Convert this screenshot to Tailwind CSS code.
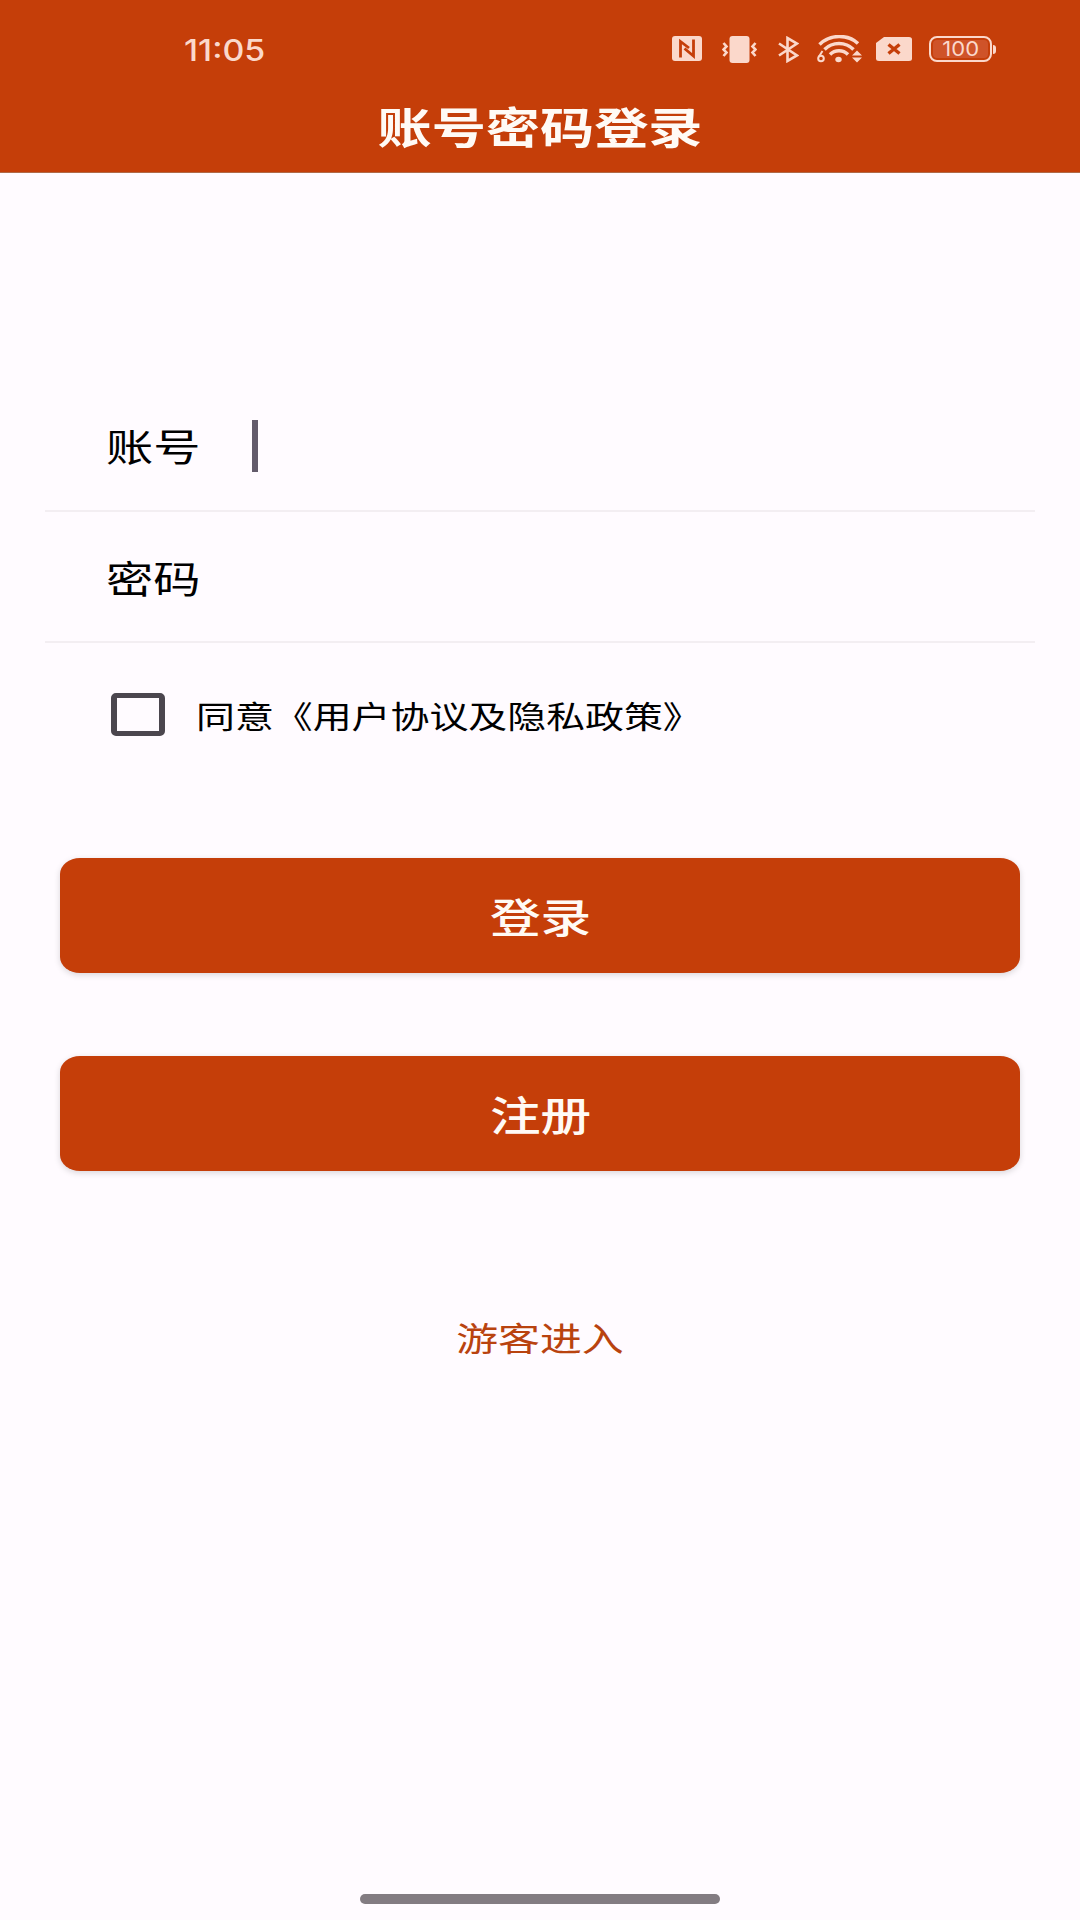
<!DOCTYPE html>
<html lang="zh-CN">
<head>
    <meta charset="UTF-8">
    <meta name="viewport" content="width=device-width, initial-scale=1.0">
    <title>账号密码登录</title>
    <script src="https://cdn.jsdelivr.net/npm/@tailwindcss/browser@4"></script>
</head>
<body class="bg-[#fffbff] font-['Noto_Sans_CJK_SC',sans-serif] text-black">
    <div class="flex h-[1920px] w-[1080px] flex-col overflow-hidden">
        <header class="flex h-[173px] shrink-0 flex-col border-b border-[#b06a48] bg-[#c53e09]">
            <!-- Status bar -->
            <div class="flex h-[98px] items-center justify-between pl-[184px] pr-[84px] text-[#fbd8cb]">
                <span class="inline-block origin-left translate-y-px scale-x-[1.13] font-['Inter',sans-serif] text-[30px] font-medium leading-none">11:05</span>
                <div class="flex items-center">
                    <!-- NFC -->
                    <svg class="mr-5" width="30" height="26" viewBox="0 0 30 26" fill="none">
                        <rect width="30" height="25" rx="3" fill="currentColor"/>
                        <path d="M8.500 21.500V5.500l8.500 6.500M12.500 12.500l9 7.500V3.500" stroke="#c53e09" stroke-width="2.800"/>
                    </svg>
                    <!-- Vibrate -->
                    <svg class="mr-[21px]" width="35" height="27" viewBox="0 0 35 27" fill="none">
                        <rect x="7.500" width="20" height="27" rx="3" fill="currentColor"/>
                        <path d="M1.500 7l3 3.500-3 3 3 3-3 3.500M33.500 7l-3 3.500 3 3-3 3 3 3.500" stroke="currentColor" stroke-width="2.600"/>
                    </svg>
                    <!-- Bluetooth -->
                    <svg class="mr-[18px]" width="21" height="27" viewBox="0 0 21 27" fill="none">
                        <path d="M1 7.500l18 12-9.500 5.500V2l9.500 5.500-18 12" stroke="currentColor" stroke-width="2.600"/>
                    </svg>
                    <!-- Wi-Fi 6 -->
                    <svg class="mr-[14px]" width="45" height="28" viewBox="0 0 45 28" fill="none">
                        <path d="M2.500 9.500C13-1 31-1 41 8.500M7.500 14.500c8-8 21-8 29 0M13 19.500c5-5 13-5 18 0" stroke="currentColor" stroke-width="3.500"/>
                        <ellipse cx="21.500" cy="24.500" rx="3.200" ry="2.700" fill="currentColor"/>
                        <path d="M5.500 16L2 21.500" stroke="currentColor" stroke-width="2"/>
                        <circle cx="4" cy="23.500" r="2.800" stroke="currentColor" stroke-width="2"/>
                        <path d="M35 20.500h10l-5-5zM35 22.500h10l-5 5z" fill="currentColor"/>
                    </svg>
                    <!-- No SIM -->
                    <svg class="mr-[17px]" width="36" height="24" viewBox="0 0 36 24" fill="none">
                        <path d="M8 0h25q3 0 3 2.500v19q0 2.500-3 2.500H3q-3 0-3-2.500V6z" fill="currentColor"/>
                        <path d="M12.500 7.500l11 9m0-9l-11 9" stroke="#c53e09" stroke-width="3.400"/>
                    </svg>
                    <!-- Battery -->
                    <div class="flex items-center">
                        <div class="flex h-[26px] w-[63px] items-center justify-center rounded-[8px] border-2 border-current bg-[#c53e09] p-[2px]">
                            <div class="flex h-full w-full items-center justify-center rounded-[4px] bg-[#cf5329]">
                                <span class="inline-block scale-x-[1.1] font-['Inter',sans-serif] text-[20px] leading-none">100</span>
                            </div>
                        </div>
                        <div class="ml-[1px] h-[9px] w-[3px] rounded-r-full bg-current"></div>
                    </div>
                </div>
            </div>
            <h1 class="flex h-[54px] items-center justify-center text-[43px] font-bold leading-none text-[#fffaf5]">
                <span class="inline-block scale-x-[1.26]">账号密码登录</span>
            </h1>
        </header>

        <main class="flex flex-1 flex-col pt-[208px]">
            <div class="mx-[45px] flex h-[131px] items-center border-b-2 border-[#f3eef2] pl-[61px]">
                <label class="w-[146px] -translate-y-px text-[37.5px] leading-none"><span class="inline-block origin-left scale-x-[1.26]">账号</span></label>
                <div class="h-[52px] w-[6px] bg-[#635b6b]"></div>
            </div>
            <div class="mx-[45px] flex h-[131px] items-center border-b-2 border-[#f3eef2] pl-[61px]">
                <label class="w-[146px] text-[37.5px] leading-none"><span class="inline-block origin-left scale-x-[1.26]">密码</span></label>
            </div>

            <div class="mt-[50px] flex h-[43px] items-center pl-[111px]">
                <div class="h-[43px] w-[54px] rounded-[5px] border-x-[6px] border-y-[5px] border-[#4b464e]"></div>
                <span class="ml-[31px] inline-block origin-left scale-x-[1.255] text-[31px] leading-none">同意《用户协议及隐私政策》</span>
            </div>

            <div class="mx-[60px] mt-[122px] flex flex-col gap-[83px]">
                <button class="flex h-[115px] items-center justify-center rounded-[20px/16px] bg-[#c53e09] pt-px text-[40.5px] font-medium leading-none text-[#fffaf5] shadow-[0_2px_6px_rgba(0,0,0,0.15)]">
                    <span class="inline-block scale-x-[1.25]">登录</span>
                </button>
                <button class="flex h-[115px] items-center justify-center rounded-[20px/16px] bg-[#c53e09] pt-px text-[40.5px] font-medium leading-none text-[#fffaf5] shadow-[0_2px_6px_rgba(0,0,0,0.15)]">
                    <span class="inline-block scale-x-[1.25]">注册</span>
                </button>
            </div>

            <a class="mt-[149px] flex justify-center text-[33.5px] leading-none text-[#b9430f]">
                <span class="inline-block scale-x-[1.25]">游客进入</span>
            </a>
        </main>

        <!-- Gesture bar -->
        <div class="flex h-[26px] shrink-0 justify-center">
            <div class="h-[10px] w-[360px] rounded-full bg-[#837c82]"></div>
        </div>
    </div>
</body>
</html>
